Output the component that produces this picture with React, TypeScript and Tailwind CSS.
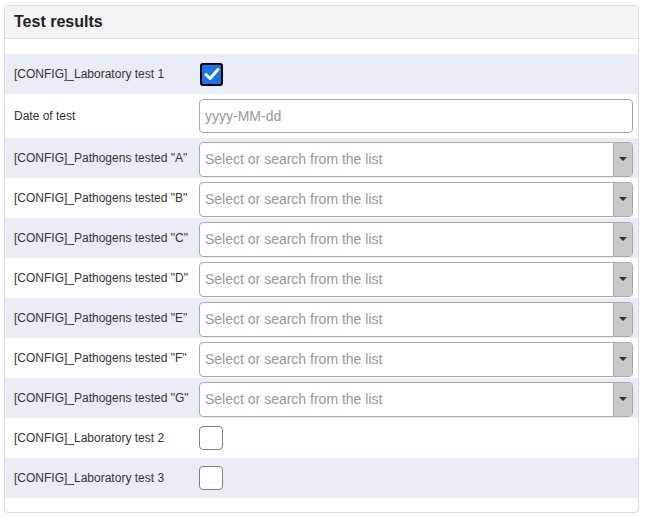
import { useState } from 'react';

type Field = {
    label: string;
    kind: 'checkbox' | 'date' | 'select';
    checked?: boolean;
};

const fields: Field[] = [
    { label: '[CONFIG]_Laboratory test 1', kind: 'checkbox', checked: true },
    { label: 'Date of test', kind: 'date' },
    { label: '[CONFIG]_Pathogens tested "A"', kind: 'select' },
    { label: '[CONFIG]_Pathogens tested "B"', kind: 'select' },
    { label: '[CONFIG]_Pathogens tested "C"', kind: 'select' },
    { label: '[CONFIG]_Pathogens tested "D"', kind: 'select' },
    { label: '[CONFIG]_Pathogens tested "E"', kind: 'select' },
    { label: '[CONFIG]_Pathogens tested "F"', kind: 'select' },
    { label: '[CONFIG]_Pathogens tested "G"', kind: 'select' },
    { label: '[CONFIG]_Laboratory test 2', kind: 'checkbox' },
    { label: '[CONFIG]_Laboratory test 3', kind: 'checkbox' },
];

function CheckBox({ initial }: { initial?: boolean }) {
    const [checked, setChecked] = useState(!!initial);
    return (
        <button
            type="button"
            onClick={() => setChecked(!checked)}
            className={
                checked
                    ? 'w-[23px] h-[23px] ml-[1px] rounded-[3px] border-2 border-black bg-[#1a73e8] flex items-center justify-center'
                    : 'w-[24px] h-[24px] rounded-[4px] border border-[#808080] bg-white'
            }
        >
            {checked && (
                <svg width="16" height="14" viewBox="0 0 16 14">
                    <path d="M2 7.5 L6 11.5 L14 2.5" fill="none" stroke="white" strokeWidth="3" strokeLinecap="round" strokeLinejoin="round" />
                </svg>
            )}
        </button>
    );
}

function SelectBox() {
    return (
        <div className="flex-1 h-[35px] mt-[2px] flex border border-[#aaa] rounded-[4px] bg-white overflow-hidden">
            <div className="flex-1 flex items-center pl-[5px] pt-[1px] text-[14px] text-[#999]">Select or search from the list</div>
            <div className="w-[19px] bg-[#c9c9c9] border-l border-[#aaa] flex items-center justify-center">
                <svg width="8" height="5" viewBox="0 0 8 5">
                    <path d="M0 0 L8 0 L4 4 Z" fill="#333" />
                </svg>
            </div>
        </div>
    );
}

export default function App() {
    return (
        <div className="w-[646px] h-[518px] bg-white pt-[5px] px-[4px]" style={{ fontFamily: '"Liberation Sans", Arial, sans-serif' }}>
            <div className="w-[635px] h-[508px] border border-[#dcdcdc] rounded-[4px] overflow-hidden">
                <div className="h-[33px] bg-[#f4f4f4] border-b border-[#dcdcdc] flex items-center pl-[9px] pb-[1px]">
                    <h2 className="text-[16px] font-bold text-[#222]">Test results</h2>
                </div>
                <div className="pt-[15px] pb-[15px]">
                    {fields.map((f, i) => (
                        <div
                            key={f.label}
                            className={
                                (i % 2 === 0 ? 'bg-[#e9eef6] ' : 'bg-white ') +
                                (f.kind === 'date' ? 'h-[44px] ' : 'h-[40px] ') +
                                'flex items-center pl-[9px] pr-[5px]'
                            }
                        >
                            <div className="w-[185px] text-[12px] text-[#333]">{f.label}</div>
                            {f.kind === 'checkbox' && <CheckBox initial={f.checked} />}
                            {f.kind === 'date' && (
                                <input
                                    placeholder="yyyy-MM-dd"
                                    className="flex-1 h-[34px] border border-[#aaa] rounded-[4px] px-[5px] text-[14px] text-[#333] placeholder:text-[#999] outline-none"
                                />
                            )}
                            {f.kind === 'select' && <SelectBox />}
                        </div>
                    ))}
                </div>
            </div>
        </div>
    );
}
